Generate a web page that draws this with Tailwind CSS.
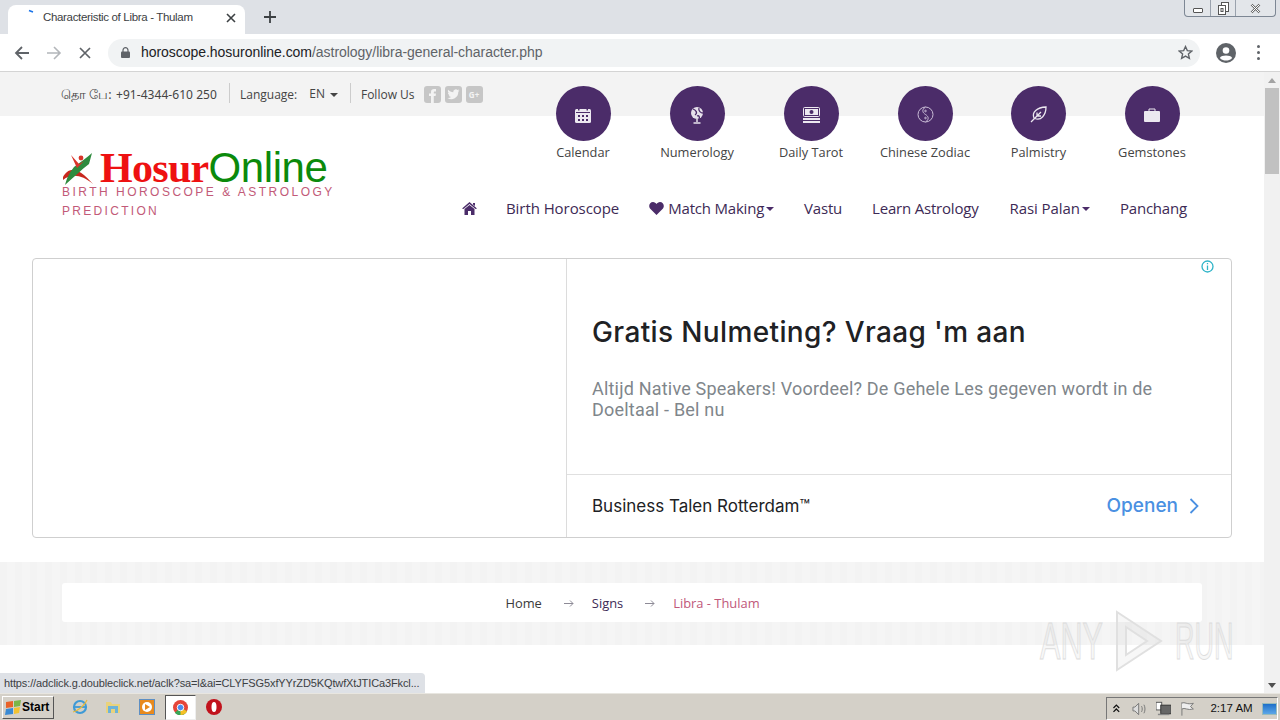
<!DOCTYPE html>
<html><head><meta charset="utf-8"><script src="https://cdn.jsdelivr.net/npm/@tailwindcss/browser@4"></script><title>Characteristic of Libra - Thulam</title></head>
<body class="overflow-hidden">
<div class="relative w-[1280px] h-[720px] flex flex-col overflow-hidden bg-white font-['Open_Sans',sans-serif] text-[#333]">
  <!-- tab strip -->
  <div class="relative h-[34px] shrink-0 bg-[#dee1e6] flex items-end pl-[8px]">
    <div class="w-[237px] h-[29px] bg-white rounded-t-[8px] flex items-center pl-[20px] pr-[9px] pb-[4px]">
      <svg class="w-[8px] h-[8px] mb-[9px] shrink-0" viewBox="0 0 8 8"><path d="M1 1.5 L5 3" stroke="#1a73e8" stroke-width="1.6" fill="none"/></svg>
      <span class="ml-[7px] text-[11.5px] tracking-[-0.33px] text-[#3c4043] font-['Liberation_Sans',sans-serif] whitespace-nowrap">Characteristic of Libra - Thulam</span>
      <svg class="ml-auto w-[10px] h-[10px]" viewBox="0 0 10 10"><path d="M1 1 L9 9 M9 1 L1 9" stroke="#3c4043" stroke-width="1.6"/></svg>
    </div>
    <svg class="ml-[19px] mb-[11px] w-[12px] h-[12px]" viewBox="0 0 12 12"><path d="M6 0 V12 M0 6 H12" stroke="#3c4043" stroke-width="1.8"/></svg>
    <div class="absolute right-[4px] top-0 w-[92px] h-[17px] flex border border-t-0 border-[#7d8794] rounded-b-[4px] bg-[#e3e6ea]">
      <div class="w-[25px] flex items-center justify-center"><div class="w-[10px] h-[5px] mt-[4px] border border-[#555] rounded-[1px] bg-white"></div></div>
      <div class="w-[25px] border-l border-[#9aa2ad] flex items-center justify-center"><svg class="w-[11px] h-[13px]" viewBox="0 0 11 13" fill="#fff" stroke="#555"><rect x="3.5" y="0.5" width="7" height="9"/><rect x="0.5" y="3.5" width="7" height="9"/><rect x="3" y="6.5" width="2" height="3"/></svg></div>
      <div class="flex-1 border-l border-[#9aa2ad] flex items-center justify-center"><svg class="w-[11px] h-[11px]" viewBox="0 0 11 11"><path d="M1.5 1.5 L9.5 9.5 M9.5 1.5 L1.5 9.5" stroke="#666" stroke-width="2.4"/><path d="M1.5 1.5 L9.5 9.5 M9.5 1.5 L1.5 9.5" stroke="#fff" stroke-width="1"/></svg></div>
    </div>
  </div>
  <!-- toolbar -->
  <div class="h-[38px] shrink-0 bg-white border-b border-[#d4d4d4] flex items-center pl-[14px]">
    <svg class="w-[16px] h-[14px]" viewBox="0 0 16 14" fill="none" stroke="#5f6368" stroke-width="1.8"><path d="M15 7 H2 M8 1 L2 7 L8 13"/></svg>
    <svg class="ml-[16px] w-[16px] h-[14px]" viewBox="0 0 16 14" fill="none" stroke="#b3b6ba" stroke-width="1.6"><path d="M1 7 H14 M8 1 L14 7 L8 13"/></svg>
    <svg class="ml-[17px] w-[12px] h-[12px]" viewBox="0 0 12 12"><path d="M1 1 L11 11 M11 1 L1 11" stroke="#5f6368" stroke-width="1.7"/></svg>
    <div class="ml-[17px] w-[1092px] h-[28px] bg-[#f1f3f4] rounded-full flex items-center pl-[13px] pr-[7px] shrink-0">
      <svg class="w-[9px] h-[11px]" viewBox="0 0 9 11"><path d="M2 5 V3.2 a2.5 2.5 0 0 1 5 0 V5" fill="none" stroke="#5f6368" stroke-width="1.2"/><rect y="4.5" width="9" height="6.5" rx="1" fill="#5f6368"/></svg>
      <span class="ml-[11px] text-[14px] tracking-[-0.04px] font-['Liberation_Sans',sans-serif] whitespace-nowrap text-[#202124]">horoscope.hosuronline.com<span class="text-[#5f6368]">/astrology/libra-general-character.php</span></span>
      <svg class="ml-auto w-[15px] h-[15px]" viewBox="0 0 24 24" fill="none" stroke="#5f6368" stroke-width="2.2"><path d="M12 2.5 L14.9 9 L22 9.7 L16.6 14.4 L18.2 21.4 L12 17.7 L5.8 21.4 L7.4 14.4 L2 9.7 L9.1 9 Z"/></svg>
    </div>
    <svg class="ml-[16px] w-[20px] h-[20px] shrink-0" viewBox="0 0 20 20"><circle cx="10" cy="10" r="10" fill="#5f6368"/><circle cx="10" cy="7.5" r="3.3" fill="#fff"/><path d="M3.8 15 C5.500 11.8 14.500 11.8 16.200 15 C14.500 17 12 17.600 10 17.600 C8 17.600 5.500 17 3.800 15Z" fill="#fff"/></svg>
    <div class="ml-[21px] w-[3px] flex flex-col gap-[3px] shrink-0"><i class="block h-[3px] rounded-full bg-[#5f6368]"></i><i class="block h-[3px] rounded-full bg-[#5f6368]"></i><i class="block h-[3px] rounded-full bg-[#5f6368]"></i></div>
  </div>
  <!-- viewport -->
  <div class="relative flex-1 flex min-h-0">
    <div class="w-[1264px] shrink-0 overflow-hidden">
      <!-- top bar -->
      <div class="h-[44px] bg-[#f3f3f3] pl-[61px] flex items-center text-[12px] text-[#444] whitespace-nowrap">
        <span class="w-[55px] font-['Noto_Sans',sans-serif] text-[12.5px] leading-[16px] mt-[1px]">தொ பே:</span>
        <span class="w-[113px] font-['Noto_Sans',sans-serif] tracking-[0.05px] mt-[1px]">+91-4344-610 250</span>
        <div class="w-px h-[20px] bg-[#ccc] -mt-[3px]"></div>
        <span class="ml-[10px] mt-[1px]">Language:</span><span class="ml-[12px]">EN</span>
        <span class="ml-[5px] mt-[2px] w-0 h-0 border-x-[4px] border-x-transparent border-t-[4px] border-t-[#444]"></span>
        <div class="ml-[12px] w-px h-[20px] bg-[#ccc] -mt-[3px]"></div>
        <span class="ml-[10px] mt-[1px]">Follow Us</span>
        <div class="ml-[9px] flex gap-[4px] mt-[1px]">
          <div class="w-[17px] h-[17px] rounded-[3px] bg-[#c6c6c6] overflow-hidden flex items-end justify-center"><svg class="w-[9px] h-[15px]" viewBox="0 0 9 15"><path d="M3 15 V8 H1 V5.5 H3 V3.8 C3 1.8 4.2 1 6 1 H8 V3.4 H6.8 C6 3.4 5.8 3.8 5.8 4.4 V5.5 H8 L7.6 8 H5.8 V15Z" fill="#f3f3f3"/></svg></div>
          <div class="w-[17px] h-[17px] rounded-[3px] bg-[#c6c6c6] flex items-center justify-center"><svg class="w-[13px] h-[11px]" viewBox="0 0 24 20"><path d="M23 2.5c-.8.4-1.700.6-2.600.8 1-.6 1.700-1.500 2-2.500-.9.5-1.900.9-2.900 1.100A4.600 4.600 0 0 0 11.700 6C7.900 5.800 4.500 4 2.200 1.200 1 3.300 1.600 6 3.600 7.300c-.7 0-1.400-.2-2-.6 0 2.200 1.600 4.100 3.700 4.600-.7.200-1.400.2-2.100.1.600 1.900 2.300 3.200 4.300 3.200A9.300 9.300 0 0 1 .7 16.500 13 13 0 0 0 20.800 5c.9-.6 1.600-1.500 2.200-2.500z" fill="#f3f3f3"/></svg></div>
          <div class="w-[17px] h-[17px] rounded-[3px] bg-[#c6c6c6] flex items-center justify-center text-[8px] font-bold leading-none text-[#f3f3f3]">G+</div>
        </div>
      </div>
      <!-- header -->
      <div class="relative h-[142px] flex">
        <div class="w-[62px] shrink-0"></div>
        <!-- logo -->
        <div class="relative w-[280px] pt-[32px] shrink-0">
          <div class="flex items-end h-[41px] leading-none whitespace-nowrap">
            <svg class="w-[34px] h-[35px] shrink-0 mb-[2px]" viewBox="0 0 34 35"><path d="M1 25 C6 15 16 14 31 32 C20 23 10 21 1 28Z" fill="#c8281e"/><path d="M3 33 C5 25 8 20 12 15 C18 10 25 6 30 1 L27 12 C19 18 11 26 3 33Z" fill="#2e8b3e"/><circle cx="19" cy="6" r="2.400" fill="#d9342a"/><path d="M9 3 L17 12 L22 9 L15 16Z" fill="#d9342a"/></svg>
            <span class="ml-[4px] font-['Liberation_Serif',serif] font-bold text-[42px] tracking-[-0.7px] text-[#ee1111]">Hosur</span><span class="font-['Liberation_Sans',sans-serif] text-[42px] tracking-[-0.4px] text-[#0b8a0b]">Online</span>
          </div>
          <div class="-mt-[6px] font-['Liberation_Sans',sans-serif] text-[12px] leading-[19px] tracking-[2.48px] text-[#c25a78] whitespace-nowrap">BIRTH HOROSCOPE &amp; ASTROLOGY</div>
          <div class="font-['Liberation_Sans',sans-serif] text-[12px] leading-[19px] tracking-[2.3px] text-[#c25a78] whitespace-nowrap">PREDICTION</div>
        </div>
        <!-- right -->
        <div class="flex-1 relative">
          <div class="absolute top-[-30px] left-[184px] flex text-[12.8px] text-[#444]">
            <div class="w-[114px] flex flex-col items-center gap-[2px]"><div class="w-[55px] h-[55px] pt-[2px] rounded-full bg-[#4b2c69] flex items-center justify-center">
              <svg class="w-[16px] h-[16px]" viewBox="0 0 16 16"><rect y="2" width="16" height="14" rx="1.500" fill="#ece8f0"/><rect x="1" y="5" width="14" height="1" fill="#4b2c69"/><g fill="#4b2c69"><rect x="3" y="0" width="1.500" height="3.500"/><rect x="11.500" y="0" width="1.500" height="3.500"/><rect x="3" y="8" width="2" height="2"/><rect x="7" y="8" width="2" height="2"/><rect x="11" y="8" width="2" height="2"/><rect x="3" y="12" width="2" height="2"/><rect x="7" y="12" width="2" height="2"/><rect x="11" y="12" width="2" height="2"/></g></svg></div><span>Calendar</span></div>
            <div class="w-[114px] flex flex-col items-center gap-[2px]"><div class="w-[55px] h-[55px] pt-[2px] rounded-full bg-[#4b2c69] flex items-center justify-center">
              <svg class="w-[14px] h-[18px]" viewBox="0 0 14 18"><circle cx="7" cy="7" r="6" fill="#e6e1eb"/><path d="M3 3 C6 4 8 7 5 9 M9 2 C8 5 11 7 13 7 M7 10 C9 9 10 11 9 13" stroke="#4b2c69" stroke-width="1.300" fill="none"/><path d="M7 13 V16 M3.500 17 H10.500" stroke="#e6e1eb" stroke-width="1.500"/></svg></div><span>Numerology</span></div>
            <div class="w-[114px] flex flex-col items-center gap-[2px]"><div class="w-[55px] h-[55px] pt-[2px] rounded-full bg-[#4b2c69] flex items-center justify-center">
              <svg class="w-[17px] h-[16px]" viewBox="0 0 17 16"><rect x="0.500" y="0.500" width="16" height="9" rx="1" fill="#4b2c69" stroke="#ece8f0"/><rect x="2" y="2" width="13" height="6" fill="#ece8f0"/><circle cx="8.500" cy="5" r="2" fill="#4b2c69"/><rect x="0" y="11" width="17" height="2" fill="#ece8f0"/><rect x="0" y="14" width="17" height="2" fill="#ece8f0"/></svg></div><span>Daily Tarot</span></div>
            <div class="w-[114px] flex flex-col items-center gap-[2px]"><div class="w-[55px] h-[55px] pt-[2px] rounded-full bg-[#4b2c69] flex items-center justify-center">
              <svg class="w-[17px] h-[17px]" viewBox="0 0 17 17" fill="none" stroke="#c9bcd6" stroke-width="1"><circle cx="8.500" cy="8.500" r="7.500"/><path d="M8.500 1 C4 4 6 7 8.500 8.500 C11 10 13 13 8.500 16"/><circle cx="8.500" cy="5" r=".8"/><circle cx="8.500" cy="12" r=".8"/></svg></div><span class="whitespace-nowrap">Chinese Zodiac</span></div>
            <div class="w-[113px] flex flex-col items-center gap-[2px]"><div class="w-[55px] h-[55px] pt-[2px] rounded-full bg-[#4b2c69] flex items-center justify-center">
              <svg class="w-[17px] h-[17px]" viewBox="0 0 17 17" fill="none" stroke="#ece8f0" stroke-width="1.300"><path d="M4 12 C1.500 6 7 1.500 16 1 C16 9 11 15 5 12.500Z"/><path d="M1 16 L11 6 M7 10 V6.500 M7.500 10 H11"/></svg></div><span>Palmistry</span></div>
            <div class="w-[114px] flex flex-col items-center gap-[2px]"><div class="w-[55px] h-[55px] pt-[2px] rounded-full bg-[#4b2c69] flex items-center justify-center">
              <svg class="w-[16px] h-[14px]" viewBox="0 0 16 14"><rect y="3" width="16" height="11" rx="1" fill="#ece8f0"/><path d="M5 3 V1 H11 V3" stroke="#ece8f0" fill="none"/></svg></div><span>Gemstones</span></div>
          </div>
          <nav class="absolute top-[82px] left-[120px] flex items-center text-[15px] leading-[20px] text-[#3d2a55] tracking-[-0.2px] whitespace-nowrap">
            <svg class="w-[15px] h-[13px]" viewBox="0 0 15 13"><path d="M7.500 0 L15 6.500 L13.500 7 L7.500 2 L1.500 7 L0 6.500Z M2.500 7 L7.500 3 L12.500 7 V13 H9 V9 H6 V13 H2.500Z M11 1 H13 V4 L11 2.500Z" fill="#4b2c69"/></svg>
            <span class="ml-[29px] tracking-[-0.07px]">Birth Horoscope</span>
            <svg class="ml-[30px] w-[15px] h-[13px]" viewBox="0 0 15 13"><path d="M7.500 13 L1 6.500 C-1 3.500 1 0 4 0 C5.500 0 6.800 1 7.500 2 C8.200 1 9.500 0 11 0 C14 0 16 3.500 14 6.500Z" fill="#4b2c69"/></svg>
            <span class="ml-[4px]">Match Making</span><span class="ml-[2px] mt-[2px] w-0 h-0 border-x-[4px] border-x-transparent border-t-[4px] border-t-[#4b2c69]"></span>
            <span class="ml-[30px]">Vastu</span>
            <span class="ml-[30px]">Learn Astrology</span>
            <span class="ml-[31px] tracking-[-0.07px]">Rasi Palan</span><span class="ml-[2px] mt-[2px] w-0 h-0 border-x-[4px] border-x-transparent border-t-[4px] border-t-[#4b2c69]"></span>
            <span class="ml-[30px]">Panchang</span>
          </nav>
        </div>
      </div>
      <!-- ad -->
      <div class="ml-[32px] w-[1200px] h-[280px] border border-[#cfcfcf] rounded-[4px] flex relative">
        <div class="w-[533px] shrink-0"></div>
        <div class="w-[665px] shrink-0 border-l border-[#dcdcdc] flex flex-col">
          <div class="h-[215px] pl-[25px] pr-[60px] pt-[54px]">
            <div class="font-['Inter',sans-serif] font-medium text-[28px] leading-[38px] text-[#202124] tracking-[0.37px] whitespace-nowrap">Gratis Nulmeting? Vraag 'm aan</div>
            <div class="mt-[27px] font-['Roboto',sans-serif] text-[18px] leading-[21px] text-[#80868b] w-[575px] tracking-[0.2px]">Altijd Native Speakers! Voordeel? De Gehele Les gegeven wordt in de Doeltaal - Bel nu</div>
          </div>
          <div class="flex-1 border-t border-[#e0e0e0] flex items-center pl-[25px] pr-[32px] justify-between">
            <span class="font-['Inter',sans-serif] text-[17px] text-[#202124] mt-[1px]">Business Talen Rotterdam™</span>
            <div class="flex items-center gap-[11px]"><span class="font-['Inter',sans-serif] font-medium text-[19px] text-[#4a90e2]">Openen</span><svg class="w-[10px] h-[16px]" viewBox="0 0 10 16" fill="none" stroke="#4a90e2" stroke-width="1.800"><path d="M1.500 1 L8.500 8 L1.500 15"/></svg></div>
          </div>
        </div>
        <svg class="absolute right-[17px] top-[1px] w-[13px] h-[13px]" viewBox="0 0 13 13" fill="none" stroke="#2fb4c8" stroke-width="1.300"><circle cx="6.500" cy="6.500" r="5.500"/><path d="M6.500 5.500 V10 M6.500 3 V4.200"/></svg>
      </div>
      <!-- breadcrumb -->
      <div class="mt-[24px] h-[83px] bg-[#f4f4f4] bg-[repeating-linear-gradient(90deg,#f3f3f3_0,#f3f3f3_7px,#f5f5f5_7px,#f5f5f5_15px)] pt-[21px] px-[62px]">
        <div class="h-[39px] bg-white rounded-[3px] flex items-center justify-center text-[12.9px] text-[#3a3a3a] pt-[2px] pl-[1px]">
          <span>Home</span>
          <svg class="ml-[22px] mr-[18px] w-[10px] h-[7px]" viewBox="0 0 10 7" fill="none" stroke="#8d8a96"><path d="M0 3.500 H9 M6 .5 L9 3.500 L6 6.500"/></svg>
          <span class="text-[#3d2a55]">Signs</span>
          <svg class="ml-[22px] mr-[18px] w-[10px] h-[7px]" viewBox="0 0 10 7" fill="none" stroke="#8d8a96"><path d="M0 3.500 H9 M6 .5 L9 3.500 L6 6.500"/></svg>
          <span class="text-[#c0587a]">Libra - Thulam</span>
        </div>
      </div>
    </div>
    <!-- scrollbar -->
    <div class="w-[16px] bg-[#f1f1f1] flex flex-col items-center">
      <div class="h-[16px] flex items-center justify-center"><span class="w-0 h-0 border-x-[4px] border-x-transparent border-b-[5px] border-b-[#a3a3a3]"></span></div>
      <div class="w-[14px] h-[86px] bg-[#c1c1c1]"></div>
      <div class="mt-auto h-[16px] flex items-center justify-center"><span class="w-0 h-0 border-x-[4px] border-x-transparent border-t-[5px] border-t-[#505050]"></span></div>
    </div>
    <!-- status bubble -->
    <div class="absolute left-0 bottom-0 w-[425px] h-[20px] bg-[#dee1e6] rounded-tr-[4px] flex items-center pl-[4px] text-[11px] tracking-[-0.12px] text-[#3c4043] font-['Liberation_Sans',sans-serif] whitespace-nowrap">https://adclick.g.doubleclick.net/aclk?sa=l&amp;ai=CLYFSG5xfYYrZD5KQtwfXtJTICa3Fkcl...</div>
    <!-- watermark -->
    <div class="absolute left-[1040px] top-[538px] flex items-center font-['Liberation_Sans',sans-serif] text-[51px] leading-none text-black/5 [-webkit-text-stroke:1px_#dcdcdc]">
      <span class="block w-[62px] scale-x-[.6] origin-left">ANY</span>
      <svg class="ml-[13px] w-[48px] h-[62px]" viewBox="0 0 48 62" fill="#000" fill-opacity=".03" stroke="#e0e0e0" stroke-width="2"><path d="M2 2 L46 31 L2 60Z M11 17 L32 31 L11 45Z" fill-rule="evenodd"/></svg>
      <span class="ml-[12px] block w-[57px] scale-x-[.53] origin-left">RUN</span>
    </div>
  </div>
  <!-- taskbar -->
  <div class="h-[27px] shrink-0 bg-[#d4d0c8] border-t border-[#e8e6e0] flex items-center relative font-['Liberation_Sans',sans-serif]">
    <div class="ml-[2px] w-[52px] h-[23px] border border-t-white border-l-white border-r-[#555] border-b-[#555] flex items-center pl-[2px]">
      <svg class="w-[17px] h-[15px] shrink-0" viewBox="0 0 17 15"><path d="M1 2 L8 1 V7 L1 8Z" fill="#e8622a"/><path d="M9 1 L16 0 L15 6 L9 7Z" fill="#7ab648"/><path d="M1 9 L8 8 V14 L0 15Z" fill="#3a8ad4"/><path d="M9 8 L15 7 L14 13 L9 14Z" fill="#f2c230"/></svg>
      <span class="text-[12px] font-bold text-black">Start</span>
    </div>
    <svg class="ml-[18px] w-[16px] h-[16px]" viewBox="0 0 16 16" fill="none"><ellipse cx="8" cy="8" rx="6" ry="6" stroke="#3e9ad6" stroke-width="2.200"/><path d="M2 8 H14" stroke="#3e9ad6" stroke-width="1.800"/><path d="M1 13 C6 12 13 6 15 1" stroke="#e8b93a" stroke-width="1.200"/></svg>
    <svg class="ml-[17px] w-[16px] h-[16px]" viewBox="0 0 16 16"><path d="M1 3 H6 L7 5 H15 V14 H1Z" fill="#e9d27c"/><rect x="3" y="7" width="10" height="7" fill="#6db3d8"/><rect x="6" y="10" width="4" height="4" fill="#e9d27c"/></svg>
    <div class="ml-[18px] w-[16px] h-[16px] bg-[#e88a1e] border border-[#5d8fc4] flex items-center justify-center"><span class="w-[10px] h-[10px] rounded-full bg-white flex items-center justify-center"><span class="w-0 h-0 border-y-[3px] border-y-transparent border-l-[5px] border-l-[#e88a1e]"></span></span></div>
    <div class="ml-[10px] w-[31px] h-[25px] bg-white border border-t-[#555] border-l-[#555] border-r-[#eee] border-b-[#eee] flex items-center justify-center">
      <svg class="w-[15px] h-[15px]" viewBox="0 0 16 16"><circle cx="8" cy="8" r="8" fill="#e5453a"/><path d="M8 8 L15 12 A8 8 0 0 1 2 13.500Z" fill="#3aa757"/><path d="M8 8 L8 16 A8 8 0 0 0 15 12Z" fill="#f6c025"/><circle cx="8" cy="8" r="3.500" fill="#4a8cf0" stroke="#fff"/></svg>
    </div>
    <svg class="ml-[10px] w-[16px] h-[16px]" viewBox="0 0 16 16"><circle cx="8" cy="8" r="8" fill="#c1121c"/><ellipse cx="8" cy="8" rx="2.500" ry="5" fill="#fff"/></svg>
    <div class="absolute right-[2px] top-[3px] w-[172px] h-[23px] border border-t-[#777] border-l-[#777] border-r-white border-b-white flex items-center text-[11.5px] text-[#111]">
      <svg class="ml-[6px] w-[7px] h-[9px]" viewBox="0 0 7 9" fill="none" stroke="#111" stroke-width="1.300"><path d="M.5 4 L3.500 1 L6.500 4 M.5 8 L3.500 5 L6.500 8"/></svg>
      <svg class="ml-[12px] w-[16px] h-[14px]" viewBox="0 0 16 14" fill="none" stroke="#777"><path d="M1 5 H3 L7 1 V13 L3 9 H1Z" fill="#ddd"/><path d="M10 4 C11 6 11 8 10 10 M12.500 2.500 C14 5 14 9 12.500 11.500"/></svg>
      <svg class="ml-[9px] w-[16px] h-[15px]" viewBox="0 0 16 15"><rect x="0" y="1" width="6" height="8" fill="#fff" stroke="#555"/><rect x="5" y="4" width="11" height="9" fill="#666" stroke="#333"/><rect x="2" y="13" width="12" height="1.500" fill="#888"/></svg>
      <svg class="ml-[9px] w-[15px] h-[15px]" viewBox="0 0 15 15" fill="#eee" stroke="#777"><path d="M2 1 V15" fill="none"/><path d="M2 2 C5 0 7 4 14 2 L11 5.500 L14 8 C8 10 5 6 2 8"/></svg>
      <span class="ml-[16px] whitespace-nowrap">2:17 AM</span>
      <div class="ml-[9px] w-[16px] h-[12px] bg-gradient-to-b from-[#1d6fc9] to-[#5ca7e8] border border-[#9bb]"></div>
    </div>
  </div>
</div>
</body></html>
